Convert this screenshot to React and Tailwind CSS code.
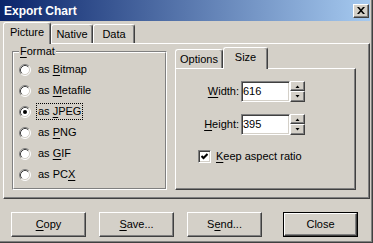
import React from 'react';

const raised =
  'border border-t-white border-l-white border-r-[#404040] border-b-[#404040] shadow-[inset_-1px_-1px_0_#808080]';
const sunken =
  'border border-t-[#808080] border-l-[#808080] border-r-white border-b-white shadow-[inset_1px_1px_0_#404040,inset_-1px_-1px_0_#d4d0c8]';

// letra de acceso subrayada
function U({ children }) {
  return <span className="underline underline-offset-[2px] decoration-1">{children}</span>;
}

function Tab({ label, selected, width }) {
  return (
    <div
      className={`relative flex justify-center pt-[3px] bg-[#d4d0c8] border-t border-l border-r border-t-white border-l-white border-r-[#404040] rounded-t-[3px] shadow-[inset_-1px_0_0_#808080] ${
        selected ? 'h-[22px] -mb-px z-10' : 'h-[19px]'
      } ${width}`}
    >
      <span className="leading-[13px]">{label}</span>
    </div>
  );
}

function Radio({ checked }) {
  return (
    <svg width="12" height="12" viewBox="0 0 12 12" className="shrink-0">
      <circle cx="6" cy="6" r="5" fill="white" />
      <path d="M2.11 9.89 A5.5 5.5 0 0 1 9.89 2.11" fill="none" stroke="#808080" />
      <path d="M9.89 2.11 A5.5 5.5 0 0 1 2.11 9.89" fill="none" stroke="#ffffff" />
      <path d="M2.82 9.18 A4.5 4.5 0 0 1 9.18 2.82" fill="none" stroke="#404040" />
      <path d="M9.18 2.82 A4.5 4.5 0 0 1 2.82 9.18" fill="none" stroke="#d4d0c8" />
      {checked && <circle cx="6" cy="6" r="2" fill="black" />}
    </svg>
  );
}

function RadioRow({ pre, mn, post, checked }) {
  return (
    <div className="flex items-center h-[21px] pl-[5px]">
      <Radio checked={checked} />
      <span
        className={`ml-[5px] px-[1px] py-[1px] leading-[13px] border ${
          checked ? 'border-dotted border-black' : 'border-transparent'
        }`}
      >
        {pre}
        <U>{mn}</U>
        {post}
      </span>
    </div>
  );
}

function Arrow({ down }) {
  return (
    <svg width="5" height="3" viewBox="0 0 5 3">
      {down ? <polygon points="0.5,0 4.5,0 2.5,2.5" fill="black" /> : <polygon points="0.5,3 4.5,3 2.5,0.5" fill="black" />}
    </svg>
  );
}

function Spin({ label, mn, rest, value, className = '' }) {
  return (
    <div className={`flex items-center h-[21px] ${className}`}>
      <span className="w-[63px] text-right leading-[13px]">
        <U>{mn}</U>
        {rest}
      </span>
      <div className={`ml-[2px] w-[49px] h-[21px] bg-white ${sunken} pl-[1px] flex items-center`}>
        <span className="leading-[13px]">{value}</span>
      </div>
      <div className="w-[15px] h-[21px] flex flex-col">
        <div className={`h-[10px] ${raised} flex items-center justify-center`}>
          <Arrow />
        </div>
        <div className={`h-[11px] ${raised} flex items-center justify-center`}>
          <Arrow down />
        </div>
      </div>
    </div>
  );
}

function Button({ children, isDefault, className = '' }) {
  const inner = (
    <div className={`w-full h-full ${raised} flex items-center justify-center`}>
      <span className="leading-[13px]">{children}</span>
    </div>
  );
  return (
    <div className={`w-[75px] h-[25px] ${isDefault ? 'border border-black' : ''} ${className}`}>{inner}</div>
  );
}

export default function App() {
  const formats = [
    ['as ', 'B', 'itmap'],
    ['as ', 'M', 'etafile'],
    ['as ', 'J', 'PEG'],
    ['as ', 'P', 'NG'],
    ['as ', 'G', 'IF'],
    ['as PC', 'X', ''],
  ];

  return (
    <div className="w-[373px] h-[243px] flex border-r border-b border-[#404040] font-['Liberation_Sans',Arial,sans-serif] text-[11px] text-black select-none">
      <div className="flex-1 flex flex-col bg-[#d4d0c8] border-r border-b border-[#808080]">
        {/* Barra de titulo */}
        <div className="h-[21px] mr-[1px] flex items-center bg-linear-to-r/srgb from-[#0a246a] to-[#a6caf0]">
          <span className="pl-[4px] text-white font-bold text-[12px] leading-[14px]">Export Chart</span>
          <div className={`ml-auto mr-[1px] w-[16px] h-[14px] bg-[#d4d0c8] ${raised} flex items-center justify-center`}>
            <svg width="8" height="7" viewBox="0 0 8 7">
              <path d="M0 0h2l2 2.3L6 0h2L5 3.5 8 7H6L4 4.7 2 7H0l3-3.5z" fill="black" />
            </svg>
          </div>
        </div>

        {/* Pestañas */}
        <div className="h-[22px] flex items-end">
          <div className="ml-[3px] flex items-end">
            <Tab label="Picture" selected width="w-[48px]" />
            <Tab label="Native" width="w-[42px]" />
            <Tab label="Data" width="w-[42px]" />
          </div>
        </div>

        <div className={`ml-[3px] w-[367px] h-[156px] ${raised} flex items-start`}>
          {/* Grupo Format */}
          <div className="ml-[8px] mt-[7px] w-[155px] h-[139px] relative border border-t-[#808080] border-l-[#808080] border-r-white border-b-white">
            <div className="h-full border border-t-white border-l-white border-r-[#808080] border-b-[#808080] pt-[6px]">
              {formats.map(([pre, mn, post], i) => (
                <RadioRow key={i} pre={pre} mn={mn} post={post} checked={i === 2} />
              ))}
            </div>
            <span className="absolute -top-[7px] left-[6px] px-[1px] bg-[#d4d0c8] leading-[13px]">
              <U>F</U>ormat
            </span>
          </div>

          {/* Options / Size */}
          <div className="ml-[8px] mt-[3px] w-[181px] flex flex-col">
            <div className="h-[21px] flex items-end">
              <Tab label="Options" width="w-[48px]" />
              <Tab label="Size" selected width="w-[45px]" />
            </div>
            <div className={`h-[122px] ${raised} pt-[12px]`}>
              <Spin mn="W" rest="idth:" value="616" />
              <Spin mn="H" rest="eight:" value="395" className="mt-[12px]" />
              <div className="mt-[15px] ml-[22px] flex items-center h-[13px]">
                <div className={`w-[13px] h-[13px] bg-white ${sunken} flex items-center justify-center`}>
                  <svg width="7" height="7" viewBox="0 0 7 7">
                    <path d="M0.5 3 L2.5 5 L6.5 1" fill="none" stroke="black" strokeWidth="2" />
                  </svg>
                </div>
                <span className="ml-[5px] leading-[13px]">
                  <U>K</U>eep aspect ratio
                </span>
              </div>
            </div>
          </div>
        </div>

        {/* Botones */}
        <div className="mt-[13px] flex">
          <Button className="ml-[11px]">
            <U>C</U>opy
          </Button>
          <Button className="ml-[13px]">
            <U>S</U>ave...
          </Button>
          <Button className="ml-[13px]">
            S<U>e</U>nd...
          </Button>
          <Button isDefault className="ml-[21px]">
            Close
          </Button>
        </div>
      </div>
    </div>
  );
}
